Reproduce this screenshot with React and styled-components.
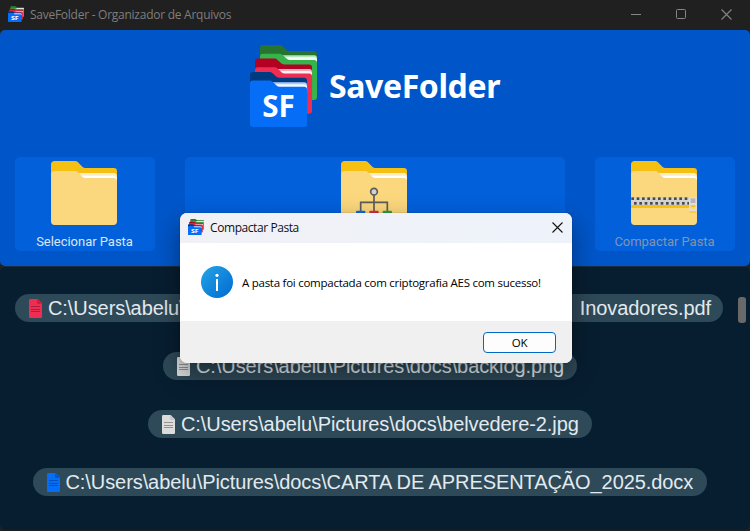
import React from "react";
import styled, { createGlobalStyle } from "styled-components";

const Global = createGlobalStyle`
  * { box-sizing: border-box; }
  body { margin: 0; background: #202020; overflow: hidden; }
  svg { display: block; flex: none; }
`;

const Window = styled.div`
  position: relative;
  width: 750px;
  height: 531px;
  display: flex;
  flex-direction: column;
  background: #202020;
  overflow: hidden;
`;
const TitleBar = styled.header`
  height: 30px;
  flex: none;
  display: flex;
  align-items: center;
  padding: 0 18px 2px 8px;
  color: #7e7e7e;
`;
const TitleText = styled.span`
  flex: 1;
  margin: 2px 0 0 6px;
  font: 12px/16px "Open Sans", sans-serif;
  letter-spacing: ${(p) => p.$spacing || "0"};
  white-space: nowrap;
`;
const Controls = styled.div`
  display: flex;
  gap: 34px;
  margin-top: 1px;
`;
const Hero = styled.section`
  height: 236px;
  flex: none;
  border-radius: 5px;
  background: #0056c9;
  padding: 15px 15px 0;
`;
const Brand = styled.div`
  display: flex;
  height: 82px;
  margin-left: 235px;
`;
const BrandName = styled.h1`
  margin: 19px 0 0 12px;
  font: 700 32px/44px "Noto Sans", sans-serif;
  letter-spacing: ${(p) => p.$spacing};
  color: #fff;
`;
const Actions = styled.div`
  display: grid;
  grid-template-columns: 140px 380px 140px;
  gap: 30px;
  margin-top: 30px;
`;
const Action = styled.button`
  height: 94px;
  border: 0;
  border-radius: 5px;
  padding: 4px 2px 0 0;
  background: #0260db;
  color: ${(p) => (p.$muted ? "#8394ae" : "#dce6f3")};
  display: flex;
  flex-direction: column;
  align-items: center;
  gap: 9px;
  font: 13px/16px Roboto, sans-serif;
  letter-spacing: -0.03px;
`;
const ActionLabel = styled.span`
  padding-left: 1px;
`;
const Files = styled.section`
  height: 264px;
  flex: none;
  display: flex;
  justify-content: space-between;
  border-radius: 5px 5px 6px 6px;
  background: #071e31;
  border-top: 1px solid #1b2d3d;
`;
const FileList = styled.div`
  width: 738px;
  padding-top: 27px;
  display: flex;
  flex-direction: column;
  align-items: center;
  gap: 30px;
`;
const FilePill = styled.div`
  height: 28px;
  width: ${(p) => p.$width}px;
  border-radius: 14px;
  background: #2e4957;
  display: flex;
  align-items: center;
  padding: 0 12px 0 14px;
  color: #e2eaf0;
  font: 20px/28px "Liberation Sans", Arial, sans-serif;
  letter-spacing: -0.08px;
  white-space: nowrap;
  margin-left: ${(p) => p.$shift || 0}px;
`;
const Path = styled.span`
  margin-left: 6px;
`;
const PathEnd = styled.span`
  margin-left: auto;
`;
const Thumb = styled.div`
  width: 8px;
  height: 26px;
  margin: 30px 4px 0 0;
  border-radius: 3px;
  background: #696969;
`;
const Dialog = styled.div`
  position: absolute;
  left: 180px;
  top: 213px;
  width: 392px;
  height: 150px;
  display: flex;
  flex-direction: column;
  border-radius: 7px;
  overflow: hidden;
  background: #fff;
  box-shadow: 0 0 1px rgba(0, 0, 0, 0.6), 0 10px 26px rgba(0, 0, 0, 0.4);
`;
const DialogTitle = styled.div`
  height: 30px;
  flex: none;
  display: flex;
  align-items: center;
  padding: 0 9px 2px 8px;
  color: #111;
  background: linear-gradient(90deg, #f1f1f5, #eef3fb);
`;
const Message = styled.div`
  flex: 1;
  display: flex;
  align-items: center;
  padding-left: 21px;
  color: #000;
`;
const MessageText = styled.span`
  margin: 2px 0 0 9px;
  font: 11.5px/16px "Open Sans", sans-serif;
  letter-spacing: -0.26px;
  white-space: nowrap;
`;
const Footer = styled.div`
  height: 42px;
  flex: none;
  display: flex;
  justify-content: flex-end;
  padding: 11px 16px 0 0;
  background: #f0f0f0;
`;
const OkButton = styled.button`
  width: 73px;
  height: 21px;
  border: 1px solid #0069c4;
  border-radius: 4px;
  padding: 1px 0 0;
  background: #fdfdfd;
  color: #000;
  font: 11.5px/18px "Open Sans", sans-serif;
  letter-spacing: -0.3px;
`;

function LogoFolder({ x, y, dark, main, paper }) {
  return (
    <g transform={`translate(${x} ${y})`}>
      <path fill={dark} d="M9 0H59Q64 0 68 4L80 15Q84 18 89 18H163Q172 18 172 27V100H0V9Q0 0 9 0Z" />
      <path fill={paper} d="M66 31H164Q172 31 172 41V62H80Z" />
      <path fill="#fff" opacity=".85" d="M72 37H164Q172 38 172 47V62H80Z" />
      <path fill={main} d="M9 26H59Q64 26 68 30L80 41Q84 45 89 45H163Q172 45 172 54V157Q172 166 163 166H9Q0 166 0 157V35Q0 26 9 26Z" />
    </g>
  );
}

function Logo({ width, height }) {
  return (
    <svg width={width} height={height} viewBox="0 0 202 247" preserveAspectRatio="none">
      <LogoFolder x={30} y={0} dark="#26742f" main="#36b34a" paper="#b5e4bc" />
      <LogoFolder x={15} y={41} dark="#b40022" main="#ee2d52" paper="#f8aab9" />
      <LogoFolder x={0} y={81} dark="#003b82" main="#066df6" paper="#a8cdfb" />
      <text x="86" y="218" textAnchor="middle" fill="#fff" fontFamily="Noto Sans, sans-serif" fontWeight="700" fontSize="91" textLength="98" lengthAdjust="spacingAndGlyphs">SF</text>
    </svg>
  );
}

const teeth = Array.from({ length: 11 }, (_, i) => 1 + i * 16);

function Folder({ kind }) {
  return (
    <svg width="66" height="64" viewBox="0 0 198 192">
      <path fill="#f6c013" d="M11 0H72Q77 0 81 4L94 17Q98 21 103 21H188Q198 21 198 31V100H0V11Q0 0 11 0Z" />
      <path fill="#fdebc6" d="M80 36H188Q198 36 198 47V70H96Z" />
      <path fill="#fff" d="M88 44H188Q198 45 198 56V70H96Z" />
      <path fill="#fbd77d" d="M11 30H72Q77 30 81 34L94 47Q98 51 103 51H188Q198 51 198 61V181Q198 192 187 192H11Q0 192 0 181V41Q0 30 11 30Z" />
      {kind === "tree" && (
        <g fill="none" stroke="#5b5b59" strokeWidth="5">
          <path d="M99 102V150M59 150V124H139V150" />
          <circle cx="99" cy="92" r="10" fill="#cfd3d4" />
          <g stroke="none">
            <rect x="45" y="149" width="28" height="22" rx="3" fill="#066df6" />
            <rect x="85" y="149" width="28" height="22" rx="3" fill="#dd2c4d" />
            <rect x="125" y="149" width="28" height="22" rx="3" fill="#30a044" />
          </g>
        </g>
      )}
      {kind === "zip" && (
        <g>
          <rect y="132" width="198" height="9" fill="#f6c013" />
          <rect y="108" width="198" height="24" fill="#d2d2d2" />
          {teeth.map((x) => (
            <React.Fragment key={x}>
              <rect x={x} y="109" width="8" height="8" fill="#4a4a4a" />
              <rect x={x + 8} y="123" width="8" height="8" fill="#4a4a4a" />
            </React.Fragment>
          ))}
          <rect x="174" y="108" width="24" height="43" rx="5" fill="#dedede" />
          <rect x="179" y="112" width="14" height="14" fill="#b5b5b5" />
          <rect x="179" y="133" width="14" height="6" fill="#f6c013" />
          <rect x="179" y="139" width="14" height="6" fill="#fbd77d" />
          <path d="M176 153H196" stroke="#f6c013" strokeWidth="3" />
        </g>
      )}
    </svg>
  );
}

function FileIcon({ color, fold, line }) {
  return (
    <svg width="13" height="19" viewBox="0 0 39 57">
      <path fill={color} d="M4 0H26L39 13V53Q39 57 35 57H4Q0 57 0 53V4Q0 0 4 0Z" />
      <path fill={fold} d="M24 0L39 15H28Q24 15 24 11Z" />
      <path d="M6 22.5H33M6 31.5H33M6 37.5H33" stroke={line} strokeWidth="3" />
    </svg>
  );
}

const red = { color: "#ee2d52", fold: "#c81f40", line: "#a91f40" };
const gray = { color: "#dcdcdc", fold: "#c6c6c6", line: "#929292" };
const blue = { color: "#066df6", fold: "#0556c4", line: "#0451b5" };

const Cross = ({ size, color }) => (
  <svg width={size} height={size} viewBox="0 0 11 11">
    <path d="M.5.5L10.5 10.5M10.5.5L.5 10.5" stroke={color} strokeWidth="1.1" />
  </svg>
);

export default function App() {
  return (
    <Window>
      <Global />
      <TitleBar>
        <Logo width={16} height={16} />
        <TitleText $spacing="-0.26px">SaveFolder - Organizador de Arquivos</TitleText>
        <Controls>
          <svg width="11" height="11"><path d="M0 5.5H10" stroke="#858585" /></svg>
          <svg width="11" height="11"><rect x=".5" y=".5" width="9" height="9" rx="1" fill="none" stroke="#858585" /></svg>
          <Cross size={11} color="#858585" />
        </Controls>
      </TitleBar>
      <Hero>
        <Brand>
          <Logo width={67} height={82} />
          <BrandName $spacing="-0.38px">SaveFolder</BrandName>
        </Brand>
        <Actions>
          <Action><Folder /><ActionLabel>Selecionar Pasta</ActionLabel></Action>
          <Action><Folder kind="tree" /></Action>
          <Action $muted><Folder kind="zip" /><ActionLabel>Compactar Pasta</ActionLabel></Action>
        </Actions>
      </Hero>
      <Files>
        <FileList>
          <FilePill $width={708}>
            <FileIcon {...red} />
            <Path>C:\Users\abelu\</Path>
            <PathEnd>Inovadores.pdf</PathEnd>
          </FilePill>
          <FilePill $width={414} $shift={2}><FileIcon {...gray} /><Path>C:\Users\abelu\Pictures\docs\backlog.png</Path></FilePill>
          <FilePill $width={444} $shift={2}><FileIcon {...gray} /><Path>C:\Users\abelu\Pictures\docs\belvedere-2.jpg</Path></FilePill>
          <FilePill $width={674} $shift={1}><FileIcon {...blue} /><Path>C:\Users\abelu\Pictures\docs\CARTA DE APRESENTAÇÃO_2025.docx</Path></FilePill>
        </FileList>
        <Thumb />
      </Files>
      <Dialog>
        <DialogTitle>
          <Logo width={16} height={16} />
          <TitleText $spacing="-0.42px">Compactar Pasta</TitleText>
          <Cross size={11} color="#111" />
        </DialogTitle>
        <Message>
          <svg width="32" height="32" viewBox="0 0 32 32">
            <defs>
              <linearGradient id="info" x1="0" y1="0" x2="1" y2="1">
                <stop offset="0" stopColor="#24a5e6" />
                <stop offset="1" stopColor="#0069d2" />
              </linearGradient>
            </defs>
            <circle cx="16" cy="16" r="16" fill="url(#info)" />
            <circle cx="16" cy="9.3" r="1.6" fill="#fff" />
            <rect x="15" y="13" width="2" height="12" fill="#fff" />
          </svg>
          <MessageText>A pasta foi compactada com criptografia AES com sucesso!</MessageText>
        </Message>
        <Footer><OkButton>OK</OkButton></Footer>
      </Dialog>
    </Window>
  );
}
